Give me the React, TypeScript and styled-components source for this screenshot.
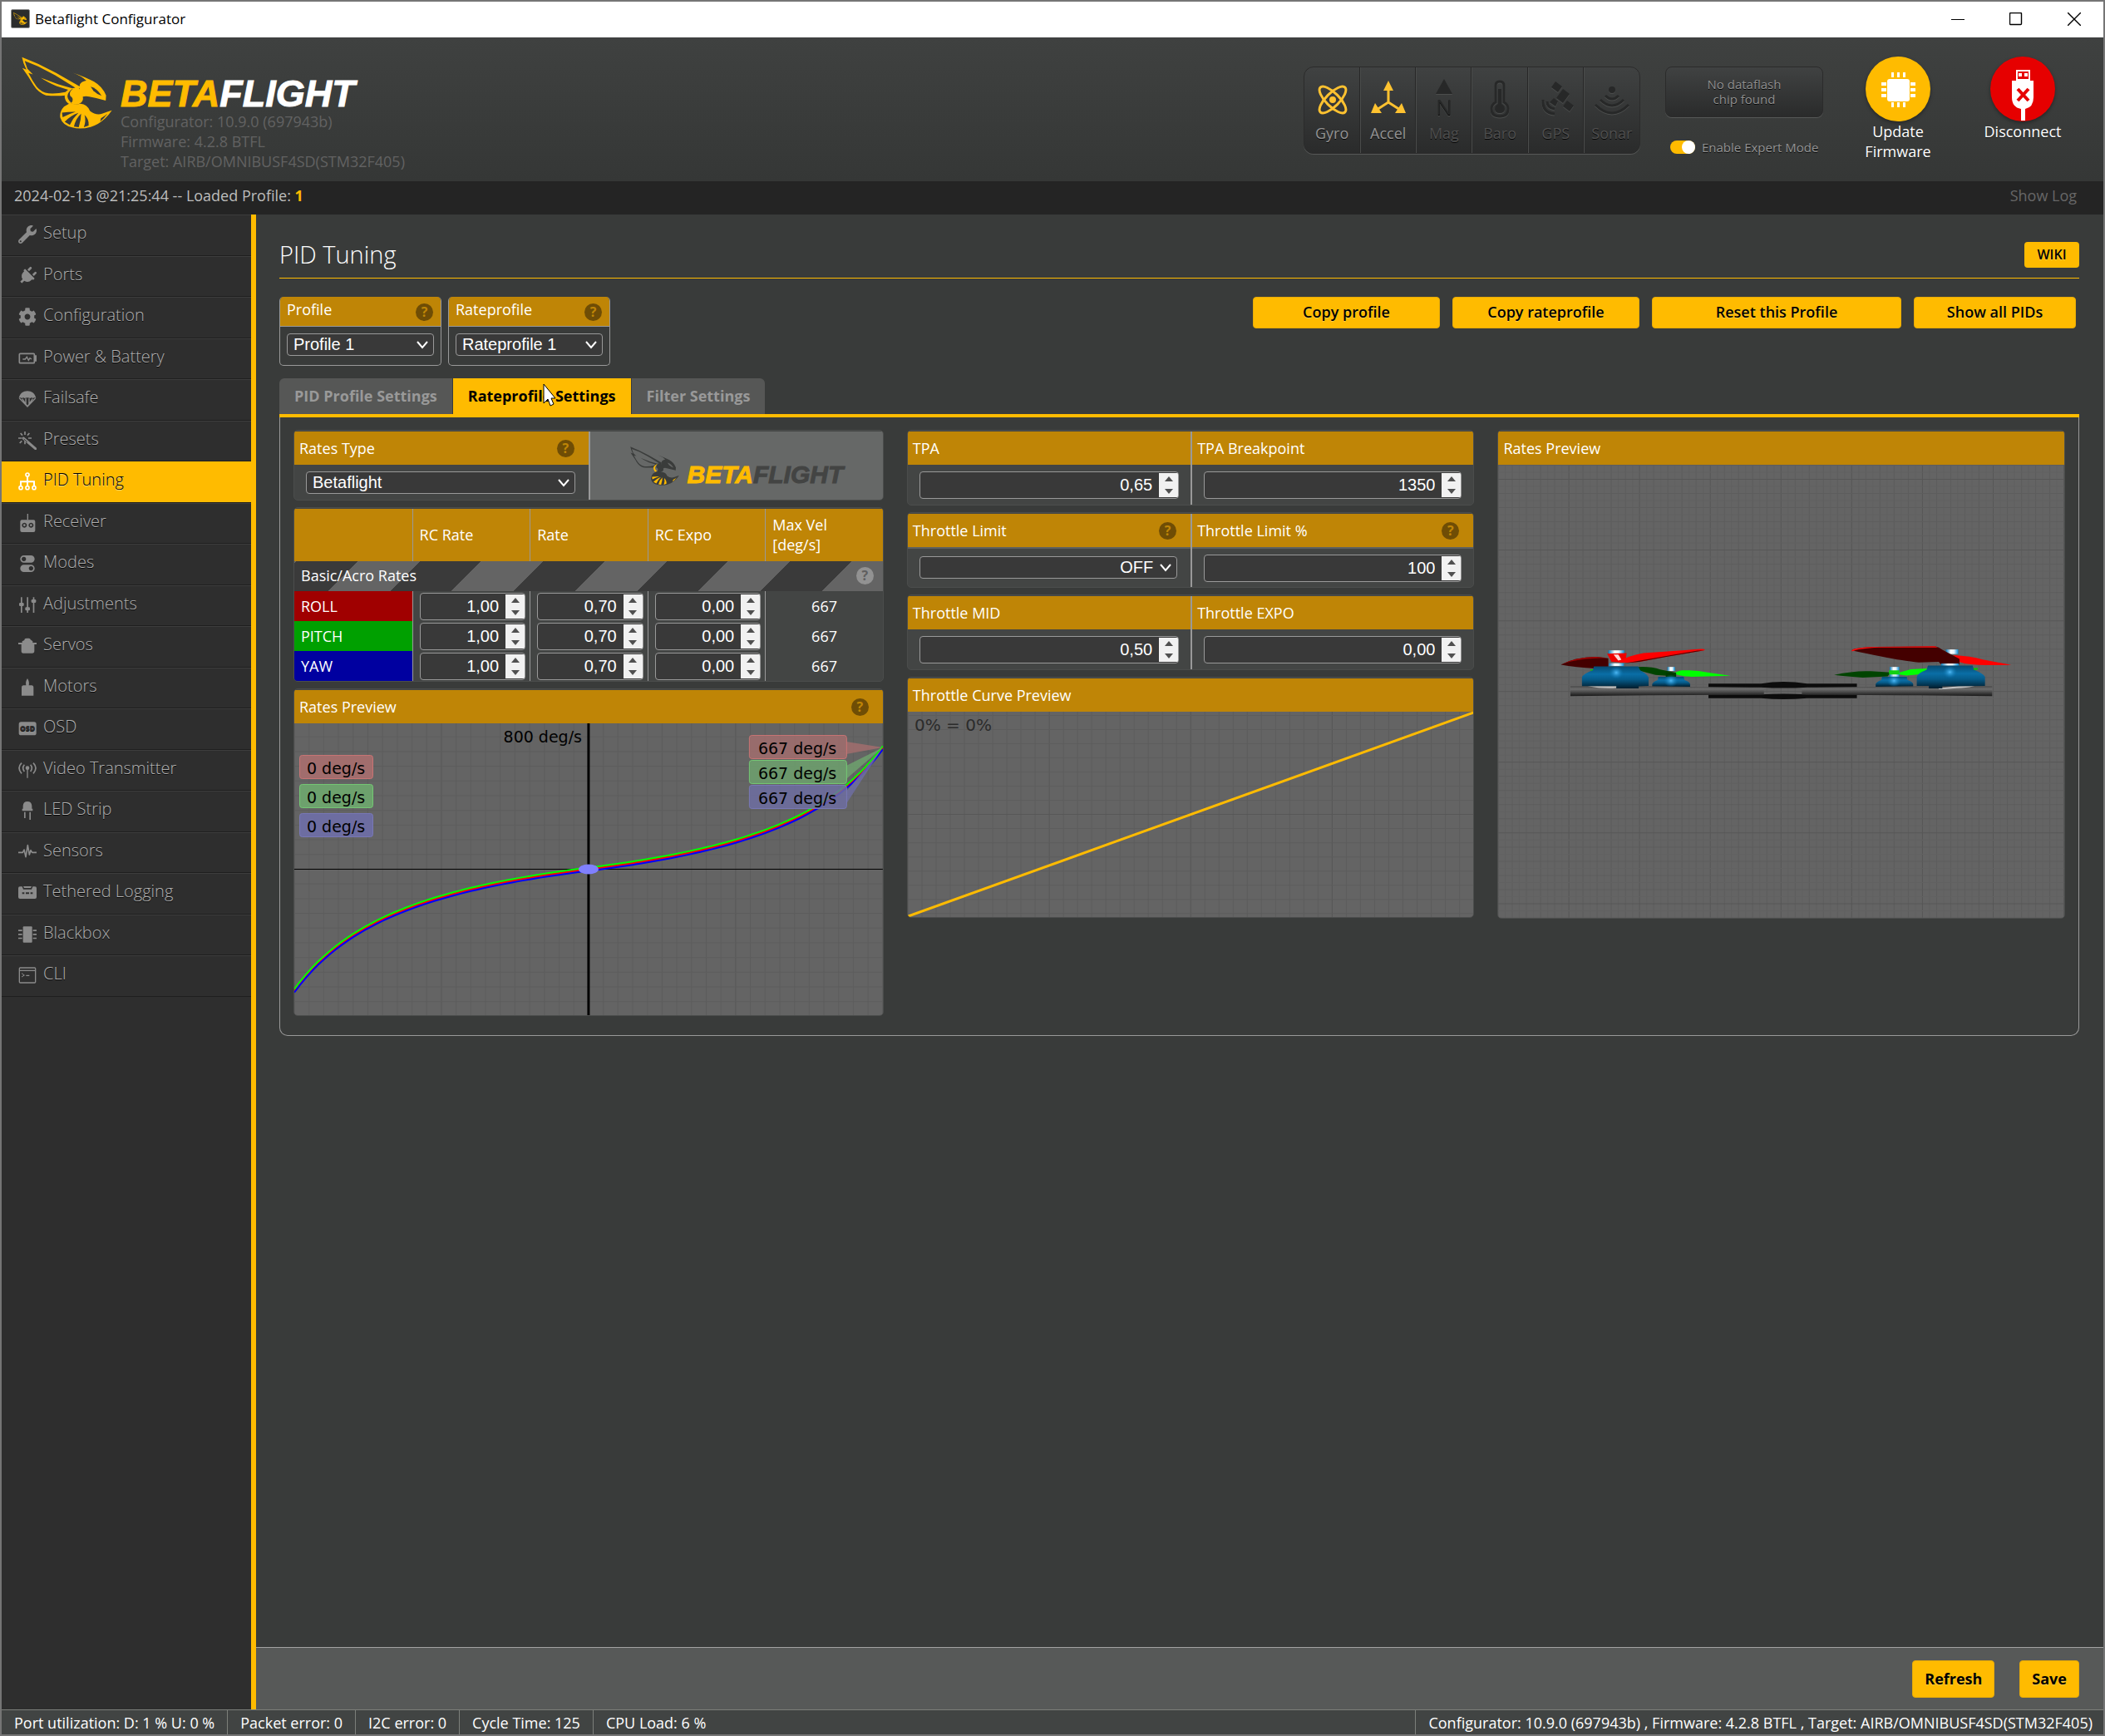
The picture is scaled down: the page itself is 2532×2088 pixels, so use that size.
import React, { useId, useState } from 'react';
import styled, { createGlobalStyle, css } from 'styled-components';
import { FaWrench, FaPlug, FaCog } from 'react-icons/fa';

const yellow = '#ffbb00';
const gold = '#bf8506';
const line = '#999999';
const ui = '"Open Sans", "Noto Sans", sans-serif';
const form = '"Liberation Sans", Arial, sans-serif';

const GlobalStyle = createGlobalStyle`
  *, *::before, *::after { box-sizing: border-box; }
  body {
    margin: 0;
    background: #393b3a;
    color: #ffffff;
    font: 400 18px/24px ${ui};
  }
  button, input, select { font: inherit; color: inherit; margin: 0; }
  button { cursor: pointer; }
  svg { display: block; flex: none; }
`;

/* ---------- window frame ---------- */

const Window = styled.div`
  min-height: 100vh;
  display: flex;
  flex-direction: column;
  border: 2px solid #757575;
`;

const TitleBar = styled.div`
  display: flex;
  align-items: center;
  height: 43px;
  padding: 0 0 2px 11px;
  gap: 6px;
  background: #ffffff;
  color: #000000;
  font-size: 17px;
`;

const AppIcon = styled.span`
  display: grid;
  place-items: center;
  width: 23px;
  height: 23px;
  background: #2b2c2c;
  border: 1px solid #8a8a8a;
  border-radius: 2px;
`;

const WindowControls = styled.div`
  display: flex;
  margin-left: auto;
`;

const WindowButton = styled.button`
  display: grid;
  place-items: center;
  width: 70px;
  height: 41px;
  padding: 0;
  border: 0;
  background: none;
`;

/* ---------- header ---------- */

const Header = styled.header`
  display: flex;
  align-items: flex-start;
  height: 173px;
  padding: 0 37px 0 24px;
  background: linear-gradient(#3f4140, #353736);
`;

const Brand = styled.div`
  display: flex;
  gap: 10px;
  padding-top: 23px;
`;

const BrandText = styled.div`
  padding-top: 24px;
  color: #626262;
`;

const Wordmark = styled.div<{ $size: number; $line: number; $tail: string }>`
  font: italic 700 ${p => p.$size}px/${p => p.$line}px ${form};
  color: ${yellow};
  -webkit-text-stroke: 1px currentColor;
  span { color: ${p => p.$tail}; }
`;

const HeaderTools = styled.div`
  display: flex;
  align-items: flex-start;
  gap: 30px;
  margin-left: auto;
`;

const bevel = css`
  background: linear-gradient(#404242, #2a2b2b);
  border: 1px solid #2b2b2b;
  box-shadow: 0 1px 0 #565857;
`;

const SensorList = styled.ul`
  ${bevel}
  display: grid;
  grid-template-columns: repeat(6, 1fr);
  width: 405px;
  height: 105px;
  margin: 35px 0 0;
  padding: 0;
  border-radius: 12px;
  list-style: none;
`;

const Sensor = styled.li<{ $on?: boolean }>`
  display: flex;
  flex-direction: column;
  align-items: center;
  gap: 7px;
  padding-top: 14px;
  color: ${p => (p.$on ? '#949494' : '#4f4f4f')};
  text-shadow: 0 1px rgba(0, 0, 0, 0.9);
  border-left: 1px solid #4a4c4b;
  border-right: 1px solid #272727;
  &:first-child { border-left: 0; }
  &:last-child { border-right: 0; }
  svg {
    color: ${p => (p.$on ? '#ffc230' : '#272828')};
    filter: ${p => (p.$on ? 'none' : 'drop-shadow(0 1px 0 #4c4e4d)')};
    overflow: visible;
  }
`;

const Storage = styled.div`
  display: flex;
  flex-direction: column;
  gap: 24px;
  width: 190px;
  margin-top: 35px;
`;

const Dataflash = styled.div`
  ${bevel}
  display: grid;
  place-content: center;
  height: 61px;
  padding-bottom: 2px;
  border-radius: 8px;
  color: #8f8f8f;
  font-size: 15px;
  line-height: 18px;
  text-align: center;
  text-shadow: 0 1px rgba(0, 0, 0, 0.9);
`;

const ExpertToggle = styled.label`
  display: flex;
  align-items: center;
  gap: 8px;
  padding-left: 6px;
  color: #949494;
  font-size: 15px;
  line-height: 24px;
  white-space: nowrap;
  text-shadow: 0 1px rgba(0, 0, 0, 0.9);
`;

const Switch = styled.input`
  appearance: none;
  display: flex;
  align-items: center;
  width: 30px;
  height: 16px;
  border-radius: 8px;
  background: #777777;
  &::before {
    content: '';
    width: 16px;
    height: 16px;
    border-radius: 8px;
    background: #ffffff;
  }
  &:checked {
    justify-content: flex-end;
    background: ${yellow};
  }
`;

const ConnectButtons = styled.div`
  display: flex;
  align-items: flex-start;
  gap: 30px;
  margin-top: 23px;
`;

const RoundButton = styled.button<{ $fill: string }>`
  width: 120px;
  padding: 0;
  border: 0;
  background: none;
  color: #ffffff;
  text-shadow: 0 1px rgba(0, 0, 0, 0.6);
  span {
    display: grid;
    place-items: end center;
    width: 78px;
    height: 78px;
    margin: 0 auto;
    border-radius: 50%;
    background: ${p => p.$fill};
    box-shadow: 0 2px 4px rgba(0, 0, 0, 0.35);
  }
`;

const LogBar = styled.div`
  display: flex;
  justify-content: space-between;
  height: 40px;
  padding: 0 32px 0 15px;
  background: #242424;
  color: #bdbdbd;
  line-height: 35px;
  strong { color: ${yellow}; }
`;

const LogLink = styled.a`
  color: #676767;
  text-decoration: none;
`;

/* ---------- body ---------- */

const Body = styled.div`
  flex: 1;
  display: flex;
`;

const Sidebar = styled.nav`
  flex: none;
  width: 306px;
  background: #2e2e2e;
  border-right: 6px solid ${yellow};
  ul { margin: 0; padding: 0; list-style: none; }
`;

const NavItem = styled.li`
  height: 50px;
  &:nth-child(even) { height: 49px; }
`;

const NavLink = styled.a<{ $active?: boolean }>`
  display: flex;
  align-items: center;
  gap: 8px;
  height: 100%;
  padding: 0 20px 6px;
  border-top: 1px solid #3d3d3d;
  border-bottom: 1px solid #1f1f1f;
  color: #b2b2b2;
  font-size: 20px;
  font-weight: 300;
  text-decoration: none;
  text-shadow: 0 1px rgba(0, 0, 0, 0.9);
  svg { margin-top: 4px; color: #8b8b8b; }
  ${p => p.$active && css`
    background: ${yellow};
    border-top-color: ${yellow};
    color: #000000;
    text-shadow: 0 1px rgba(255, 255, 255, 0.5);
    svg { color: #ffffff; }
  `}
`;

const Content = styled.main`
  flex: 1;
  min-width: 0;
  display: flex;
  flex-direction: column;
  background: #393b3a;
`;

const Scroll = styled.div`
  flex: 1;
  padding: 28px 29px 28px 28px;
`;

const Heading = styled.div`
  display: flex;
  justify-content: space-between;
  align-items: center;
  padding-bottom: 8px;
  border-bottom: 1px solid ${yellow};
  h1 {
    margin: 0;
    font-size: 29px;
    line-height: 40px;
    font-weight: 300;
  }
`;

const Button = styled.button<{ $width?: number; $tall?: boolean }>`
  width: ${p => (p.$width ? `${p.$width}px` : 'auto')};
  height: ${p => (p.$tall ? 45 : 38)}px;
  padding: 0 14px ${p => (p.$tall ? 0 : 2)}px;
  border: 1px solid #e8ab07;
  border-radius: 4px;
  background: ${yellow};
  color: #000000;
  font-weight: ${p => (p.$tall ? 700 : 600)};
  text-shadow: 0 1px rgba(255, 255, 255, 0.3);
`;

const WikiLink = styled.a`
  display: grid;
  place-items: center;
  width: 66px;
  height: 31px;
  padding-bottom: 1px;
  border-radius: 4px;
  background: ${yellow};
  color: #000000;
  font-size: 16px;
  font-weight: 600;
  text-decoration: none;
  text-shadow: 0 1px rgba(255, 255, 255, 0.3);
`;

const ProfileRow = styled.div`
  display: flex;
  align-items: flex-start;
  gap: 8px;
  margin: 22px 0 15px;
`;

const Actions = styled.div`
  display: flex;
  gap: 15px;
  margin: 0 4px 0 auto;
`;

const ProfileBox = styled.div`
  width: 195px;
  height: 83px;
  border: 1px solid ${line};
  border-top: 0;
  border-radius: 5px;
  overflow: hidden;
`;

const ProfileHead = styled.div`
  display: flex;
  justify-content: space-between;
  height: 36px;
  padding: 0 9px 0 8px;
  background: ${gold};
  border-bottom: 1px solid ${line};
  line-height: 30px;
  > span { margin-top: 8px; }
`;

const ProfileBody = styled.div`
  padding: 8px;
`;

const HelpDot = styled.span<{ $muted?: boolean }>`
  display: grid;
  place-items: center;
  width: 21px;
  height: 21px;
  border-radius: 50%;
  background: ${p => (p.$muted ? '#929292' : '#6f4d05')};
  color: ${p => (p.$muted ? '#5f5f5f' : gold)};
  font-size: 16px;
  font-weight: 700;
  line-height: 21px;
`;

const Tabs = styled.div`
  display: flex;
  gap: 1px;
  border-bottom: 4px solid ${yellow};
`;

const Tab = styled.button<{ $active?: boolean }>`
  height: 43px;
  padding: 0 18px 2px;
  border: 0;
  background: ${p => (p.$active ? yellow : '#565756')};
  color: ${p => (p.$active ? '#000000' : '#999999')};
  font-weight: 700;
  &:first-child { border-top-left-radius: 6px; }
  &:last-child { border-top-right-radius: 6px; }
`;

const Panel = styled.div`
  display: grid;
  grid-template-columns: 26fr 25fr 25fr;
  align-items: start;
  gap: 28px;
  padding: 15px 16px 23px;
  border: 1px solid ${line};
  border-top: 0;
  border-radius: 0 0 10px 10px;
`;

const Column = styled.div`
  display: grid;
  gap: 8px;
  min-width: 0;
`;

const Card = styled.section`
  padding-top: 1px;
  border: 1px solid #4b4d4c;
  border-radius: 5px;
  background: #434544;
  overflow: hidden;
`;

const CardHead = styled.div`
  display: flex;
  align-items: center;
  justify-content: space-between;
  height: 40px;
  padding: 0 17px 0 6px;
  background: ${gold};
`;

const Pair = styled.div`
  display: grid;
  grid-template-columns: 1fr 1fr;
  > * + * { border-left: 2px solid ${line}; }
`;

const Cell = styled.div`
  display: flex;
  flex-direction: column;
`;

const CellBody = styled.div<{ $ruled?: boolean; $tight?: boolean }>`
  height: ${p => (p.$tight ? 42 : 48)}px;
  padding: ${p => (p.$ruled ? 7 : 8)}px 14px 0;
  border-top: ${p => (p.$ruled ? '2px solid #5f6160' : '0')};
`;

const LogoCell = styled.div`
  display: flex;
  align-items: center;
  justify-content: center;
  background: #666867;
`;

const SmallLogo = styled.div`
  display: flex;
  align-items: flex-end;
  gap: 10px;
`;

const SelectBox = styled.div`
  position: relative;
  svg {
    position: absolute;
    right: 6px;
    top: 9px;
    pointer-events: none;
  }
  ${CellBody} > & {
    margin-right: 2px;
  }
`;

const RuledSelect = styled.div`
  padding: 2px 2px 0 0;
`;

const SelectField = styled.select<{ $right?: boolean }>`
  appearance: none;
  display: block;
  width: 100%;
  height: 27px;
  padding: 0 ${p => (p.$right ? 28 : 24)}px 0 7px;
  border: 1px solid ${line};
  border-radius: 4px;
  background: #393939;
  font: 400 20px/25px ${form};
  text-align-last: ${p => (p.$right ? 'right' : 'left')};
`;

const NumberBox = styled.div`
  display: flex;
  height: 33px;
  border: 1px solid ${line};
  border-radius: 4px;
  background: #393939;
  overflow: hidden;
  input {
    flex: 1;
    min-width: 0;
    padding: 0 8px 0 0;
    border: 0;
    outline: 0;
    background: none;
    font: 400 20px/31px ${form};
    text-align: right;
  }
`;

const Spinner = styled.div`
  display: flex;
  flex-direction: column;
  width: 23px;
  margin: 1px 0;
  background: #f1f1f1;
`;

const SpinButton = styled.button`
  flex: 1;
  display: grid;
  place-items: center;
  padding: 0;
  border: 0;
  background: none;
  color: #505050;
`;

const RateTable = styled.table`
  width: 100%;
  table-layout: fixed;
  border-collapse: separate;
  border-spacing: 0;
  th, td { text-align: left; font-weight: 400; }
  thead th {
    height: 63px;
    padding: 0 8px 1px;
    background: ${gold};
  }
  tr > * + * { border-left: 1px solid ${line}; }
`;

const BandCell = styled.td`
  height: 36px;
  padding: 0 11px 2px 8px;
  background: repeating-linear-gradient(135deg, #646464 0 2px, #3a3a3a 2px 54px, #646464 54px 105px);
  div {
    display: flex;
    align-items: center;
    justify-content: space-between;
  }
`;

const AxisCell = styled.th<{ $color: string }>`
  height: 36px;
  padding: 0 8px;
  background: ${p => p.$color};
`;

const InputCell = styled.td`
  padding: 2px 5px 1px 8px;
`;

const VelocityCell = styled.td`
  padding: 0;
  && { text-align: center; }
`;

const Graph = styled.svg`
  width: 100%;
  height: auto;
  background: #646464;
  font-family: "DejaVu Sans", Verdana, sans-serif;
`;

const Toolbar = styled.div`
  display: flex;
  align-items: center;
  justify-content: flex-end;
  gap: 30px;
  height: 75px;
  padding-right: 29px;
  border-top: 1px solid #a3a3a3;
  background: #575958;
`;

const StatusBar = styled.footer`
  display: flex;
  height: 30px;
  border-top: 1px solid #7c7f7a;
  background: #414443;
  line-height: 31px;
  white-space: nowrap;
`;

const Status = styled.div<{ $last?: boolean; $end?: boolean }>`
  padding: 0 15px;
  border-right: ${p => (p.$last ? '0' : '1px solid #7c7f7a')};
  ${p => p.$end && css`
    margin-left: auto;
    padding-right: 13px;
    border-left: 1px solid #7c7f7a;
  `}
`;

const Pointer = styled.svg`
  position: absolute;
  left: 653px;
  top: 461px;
  pointer-events: none;
`;

/* ---------- drawings ---------- */

function Wasp({ width, height, body, cut, thorax }: { width: number; height: number; body: string; cut: string; thorax: string }) {
  return (
    <svg width={width} height={height} viewBox="64 203 265 259" preserveAspectRatio="none" aria-hidden="true">
      <path fill={body} fillRule="evenodd" d="M65 205 L112 229 L165 262 L236 312 L230 322 L212 320 Q198 326 193 342 Q165 346 135 342 Q112 332 99 306 Q84 274 66 244 L78 250 Q68 226 65 205 Z M73 219 L81 247 L97 267 L84 262 Q96 292 108 311 Q122 332 143 335 Q168 337 192 330 L200 322 L166 309 Q138 294 120 279 L172 303 L212 317 L221 315 L162 270 L112 238 Z" />
      <path fill={body} d="M212 260 Q250 276 276 293 Q300 310 311 342 L310 361 Q288 353 262 347 Q252 344 243 347 Q246 364 234 371 Q220 380 208 370 Q221 356 206 344 Q202 328 214 319 Q226 315 234 320 Q230 296 248 291 Q252 289 254 290 Q240 272 212 260 Z" />
      <path fill={cut === yellow ? '#666867' : cut} d="M266 311 Q284 316 298 344 Q284 338 274 326 Z" />
      <path fill={thorax} d="M206 322 Q186 334 191 354 Q194 368 205 374 L209 368 Q199 358 198 345 Q198 332 211 320 Z" />
      <path fill={body} d="M207 369 Q219 378 236 372 Q256 374 264 398 Q282 415 301 407 Q318 400 328 396 Q318 414 308 425 Q288 448 266 455 Q236 465 212 457 Q184 450 177 422 Q174 400 188 382 Z" />
      <g fill={cut}>
        <path d="M182 404 Q206 400 222 401 Q204 408 184 420 Z" />
        <path d="M190 437 Q208 414 230 405 Q214 424 205 448 Z" />
        <path d="M217 454 Q222 426 238 408 Q238 430 231 456 Z" />
        <path d="M246 456 Q253 434 248 412 Q262 428 260 450 Z" />
        <path d="M296 424 Q308 416 315 408 Q306 424 294 436 Z" />
      </g>
    </svg>
  );
}

function Help({ muted }: { muted?: boolean }) {
  return <HelpDot $muted={muted} title="Help">?</HelpDot>;
}

const box = { width: 22, height: 22, viewBox: '0 0 66 66', fill: 'currentColor', 'aria-hidden': true } as const;
const stroke = { fill: 'none', stroke: 'currentColor' } as const;

const icons: Record<string, React.ReactNode> = {
  Setup: <FaWrench size={22} />,
  Ports: <FaPlug size={22} transform="rotate(45)" />,
  Configuration: <FaCog size={22} />,
  'Power & Battery': (
    <svg {...box}><rect x="4" y="16" width="54" height="34" rx="3" {...stroke} strokeWidth="5" /><path d="M60 22h6v22h-6z" /><path d="M16 36h9l6-8 6 12 5-8 6 4" {...stroke} strokeWidth="4" /></svg>
  ),
  Failsafe: (
    <svg {...box}><path d="M2 30C6 12 18 4 33 4s27 8 31 26q-6-4-11 0-5-4-10 0-10-4-20 0-5-4-10 0-5-4-11 0Z" /><path d="M4 30 33 60 62 30M14 32l18 26M52 32 34 58M27 31v24M39 31v24" {...stroke} strokeWidth="4" /></svg>
  ),
  Presets: (
    <svg {...box}><path d="m18 24 44 38" {...stroke} strokeWidth="9" strokeLinecap="round" /><path d="m20 27 12 11" stroke="#2e2e2e" strokeWidth="3" /><path d="M24 0v12M8 6l7 8M40 6l-7 8M0 24h12M48 24H36M5 42l8-8M24 34v12" {...stroke} strokeWidth="5" /></svg>
  ),
  'PID Tuning': (
    <svg {...box}><g {...stroke} strokeWidth="5"><circle cx="33" cy="9" r="6" /><circle cx="9" cy="56" r="6" /><circle cx="33" cy="56" r="6" /><circle cx="57" cy="56" r="6" /><path d="M33 15v35M9 50V34h48v16" strokeWidth="6" /></g></svg>
  ),
  Receiver: (
    <svg {...box}><path d="M32 0h4v22h-4z" /><path fillRule="evenodd" d="M13 22h42q6 0 6 6v32q0 6-6 6H13q-6 0-6-6V28q0-6 6-6Zm9 10a9 9 0 1 0 .1 0Zm24 0a9 9 0 1 0 .1 0Z" /><circle cx="22" cy="41" r="4" /><circle cx="46" cy="41" r="4" /></svg>
  ),
  Modes: (
    <svg {...box}><path fillRule="evenodd" d="M20 3h26a13 13 0 0 1 0 26H20a13 13 0 0 1 0-26Zm0 5a8 8 0 1 0 .1 0ZM20 37h26a13 13 0 0 1 0 26H20a13 13 0 0 1 0-26Zm26 5a8 8 0 1 0 .1 0Z" /></svg>
  ),
  Adjustments: (
    <svg {...box}><path d="M9 4h5v56H9zM31 4h5v56h-5zM53 4h5v56h-5z" /><rect x="3" y="24" width="17" height="12" rx="4" /><rect x="25" y="40" width="17" height="12" rx="4" /><rect x="47" y="12" width="17" height="12" rx="4" /></svg>
  ),
  Servos: (
    <svg {...box}><path d="M22 12q0-7 8-7h8q6 0 6 5l8 6v5h14v6h-8v24q0 8-8 8H18q-7 0-7-8V27H0v-6h14v-5l8-4Z" /></svg>
  ),
  Motors: (
    <svg {...box}><path d="M33 0q8 12 5 25h10q7 0 7 8v29H12V33q0-8 7-8h9Q25 12 33 0Z" /></svg>
  ),
  OSD: (
    <svg {...box}><rect x="2" y="10" width="63" height="48" rx="8" /><text x="33" y="43" textAnchor="middle" fill="#2e2e2e" fontFamily="Open Sans, sans-serif" fontWeight="800" fontSize="26">OSD</text></svg>
  ),
  'Video Transmitter': (
    <svg {...box}><circle cx="33" cy="26" r="7" /><path d="M31 30h4v32h-4z" /><path d="M22 14q-10 12 0 25M44 14q10 12 0 25M12 8Q-6 26 12 46M54 8q18 18 0 38" {...stroke} strokeWidth="5" /></svg>
  ),
  'LED Strip': (
    <svg {...box}><path d="M17 26V16Q18 0 33 0t16 16v10h3v8H14v-8ZM21 38h5v22h-5zM40 38h5v28h-5z" /></svg>
  ),
  Sensors: (
    <svg {...box}><path d="M0 34h16l5-10 6 26 7-42 6 34 5-16 5 8h16" {...stroke} strokeWidth="5" strokeLinejoin="round" /></svg>
  ),
  'Tethered Logging': (
    <svg {...box}><path fillRule="evenodd" d="M6 10h8l4 10h30l4-10h8q6 0 6 6v32q0 6-6 6H6q-6 0-6-6V16q0-6 6-6Zm8 21v6h8v-6Zm13 0v6h12v-6Zm17 0v6h8v-6Z" /><path d="M18 9h30l-3 6H21Z" /></svg>
  ),
  Blackbox: (
    <svg {...box}><rect x="17" y="4" width="33" height="58" rx="3" /><path d="M0 16h14v5H0zM0 30h14v5H0zM0 44h14v5H0zM53 16h13v5H53zM53 30h13v5H53zM53 44h13v5H53z" /></svg>
  ),
  CLI: (
    <svg {...box}><rect x="4" y="6" width="58" height="54" rx="3" {...stroke} strokeWidth="4" /><path d="M4 14h58v4H4zM28 32h12v4H28z" /><path d="m12 26 10 7-10 6" {...stroke} strokeWidth="3" /></svg>
  ),
};

const sensorBox = { width: 44, height: 46, viewBox: '0 0 44 46', fill: 'currentColor', 'aria-hidden': true } as const;

const sensors: { name: string; on?: boolean; icon: React.ReactNode }[] = [
  {
    name: 'Gyro', on: true,
    icon: <svg {...sensorBox}><g {...stroke} strokeWidth="3"><ellipse cx="23" cy="25" rx="21" ry="8" transform="rotate(45 23 25)" /><ellipse cx="23" cy="25" rx="21" ry="8" transform="rotate(-45 23 25)" /></g><circle cx="23" cy="25" r="4" /></svg>,
  },
  {
    name: 'Accel', on: true,
    icon: <svg {...sensorBox}><path d="M22 12v16L8 37M22 28l14 9" {...stroke} strokeWidth="3" /><path d="m22 2 6 12H16ZM1 41 6 29l8 12ZM43 41 38 29l-8 12Z" /></svg>,
  },
  {
    name: 'Mag',
    icon: <svg {...sensorBox}><path d="m22 0 10 18H12Z" /><text x="22" y="43" textAnchor="middle" fontFamily="Open Sans, sans-serif" fontSize="26">N</text></svg>,
  },
  {
    name: 'Baro',
    icon: <svg {...sensorBox}><path d="M17 8q0-5 5-5t5 5v20q5 3 5 8 0 9-10 9t-10-9q0-5 5-8Z" {...stroke} strokeWidth="3" /><path d="M20 12h4v18q4 2 4 6 0 5-6 5t-6-5q0-4 4-6Z" /></svg>,
  },
  {
    name: 'GPS',
    icon: <svg {...sensorBox}><path d="m22 3 8 6-5 7-8-6ZM31 12l8 6-8 11-8-6ZM36 26l8 6-5 7-8-6Z" /><path d="M12 27q0 8 9 9M7 25q-1 16 14 17" {...stroke} strokeWidth="3" /><path d="m20 23 5 4-3 6-7-5Z" /></svg>,
  },
  {
    name: 'Sonar',
    icon: <svg {...sensorBox}><circle cx="22" cy="13" r="4" /><path d="M14 20q8 8 16 0M8 25q14 14 28 0M2 31q20 20 40 0" {...stroke} strokeWidth="3" /></svg>,
  },
];

/* A square grid centred on the drawing, as behind every preview. */
function GridLines({ width, height, step }: { width: number; height: number; step: number }) {
  const marks = (size: number) => {
    const half = Math.floor(size / 2 / step);
    return Array.from({ length: half * 2 + 1 }, (_, i) => i - half);
  };
  const tone = (i: number) => (i % 10 === 0 ? '#575757' : i % 2 === 0 || step > 12 ? '#5d5d5d' : '#616161');
  return (
    <g strokeWidth="1">
      {marks(width).map(i => <path key={`x${i}`} stroke={tone(i)} d={`M${width / 2 + i * step} 0V${height}`} />)}
      {marks(height).map(i => <path key={`y${i}`} stroke={tone(i)} d={`M0 ${height / 2 + i * step}H${width}`} />)}
    </g>
  );
}

function ratePath(offset: number) {
  const points: string[] = [];
  for (let i = -50; i <= 50; i++) {
    const stick = i / 50;
    const velocity = (200 * stick) / (1 - Math.abs(stick) * 0.7);
    points.push(`${354 + stick * 354} ${175.5 - (velocity / 800) * 175.5 + offset}`);
  }
  return 'M' + points.join('L');
}

const axisTints = [
  { fill: '#a16d6d', edge: '#c97474' },
  { fill: '#6da16d', edge: '#74c974' },
  { fill: '#6d6da1', edge: '#7878b8' },
];

function RatesCurve() {
  const tails = ['M664 22V37L708 29Z', 'M664 51V67L708 29Z', 'M664 82V97L708 29Z'];
  return (
    <Graph viewBox="0 0 708 351" role="img" aria-label="Rates curve">
      <GridLines width={708} height={351} step={17.7} />
      <path d="M0 175.5H708" stroke="#000" strokeWidth="1" />
      <path d="M354 0V351" stroke="#000" strokeWidth="3" />
      <g fill="none" strokeWidth="2">
        <path d={ratePath(0)} stroke="#f00" />
        <path d={ratePath(-2)} stroke="#0f0" />
        <path d={ratePath(2)} stroke="#00f" />
      </g>
      <ellipse cx="354" cy="175.5" rx="12" ry="6" fill="#8080ff" />
      {axisTints.map((t, i) => (
        <g key={t.fill} fill={t.fill} stroke={t.edge}>
          <rect x="6.5" y={38.5 + i * 35} width="88" height="28" rx="3" />
          <path d={tails[i]} stroke="none" fillOpacity="0.85" />
          <rect x="547.5" y={14.5 + i * 30} width="117" height="28" rx="3" fillOpacity="0.85" />
        </g>
      ))}
      <g fill="#000" fontSize="19">
        <text x="346" y="23" textAnchor="end">800 deg/s</text>
        {[0, 1, 2].map(i => <text key={i} x="15" y={61 + i * 35}>0 deg/s</text>)}
        {[0, 1, 2].map(i => <text key={i} x="558" y={37 + i * 30}>667 deg/s</text>)}
      </g>
    </Graph>
  );
}

function ThrottleCurve() {
  return (
    <Graph viewBox="0 0 680 247" role="img" aria-label="Throttle curve">
      <GridLines width={680} height={247} step={17} />
      <path d="M0 246 680 1" stroke={yellow} strokeWidth="3" />
      <text x="8" y="23" fontSize="20" fill="#2b2b2b">0% = 0%</text>
    </Graph>
  );
}

const Motor = ({ d, cx, top }: { d: string; cx: number; top: number }) => (
  <>
    <path d={d} fill="url(#motor)" />
    <ellipse cx={cx} cy={top + 24} rx="18" ry="22" fill="url(#shine)" />
  </>
);

function Drone() {
  return (
    <Graph viewBox="0 0 680 545" role="img" aria-label="Model preview">
      <defs>
        <linearGradient id="motor" x2="0" y2="1"><stop stopColor="#064a70" /><stop offset=".35" stopColor="#0a6ea6" /><stop offset=".6" stopColor="#065a88" /><stop offset="1" stopColor="#001c2c" /></linearGradient>
        <radialGradient id="shine"><stop stopColor="#4db8f5" /><stop offset="1" stopColor="#0a78b6" stopOpacity="0" /></radialGradient>
        <linearGradient id="arm" x2="0" y2="1"><stop stopColor="#4a4a4a" /><stop offset=".3" stopColor="#6c6c6c" /><stop offset="1" stopColor="#171717" /></linearGradient>
        <linearGradient id="hub"><stop stopColor="#0a78b6" /><stop offset=".4" stopColor="#ffffff" /><stop offset=".65" stopColor="#e8f6ff" /><stop offset="1" stopColor="#0a8fd6" /></linearGradient>
      </defs>
      <GridLines width={680} height={545} step={8.5} />
      <g transform="translate(-22 161) scale(.4796 .3444)">
        <path d="M277 246h14v8l-14-4ZM1230 242h18v5l-18 6Z" fill="#00c800" />
        <path d="M397 238Q430 236 452 247L490 258 482 270 440 266 397 250Z" fill="#004400" />
        <path d="M484 259 505 250Q540 248 570 257L628 269 530 272Q500 270 484 259Z" fill="#00ff00" />
        <rect x="466" y="258" width="26" height="15" fill="#003a00" />
        <rect x="470" y="238" width="19" height="14" fill="url(#hub)" />
        <Motor cx={479} top={262} d="M447 272H511L513 284Q526 290 527 298V307H432V298Q434 290 446 284Z" />
        <path d="M888 266Q940 250 980 253L1030 257 1022 271 960 275Q920 272 888 266Z" fill="#004400" />
        <path d="M1040 262 1080 246 1121 243 1115 262 1070 268Z" fill="#00ff00" />
        <rect x="1027" y="238" width="24" height="34" fill="url(#hub)" />
        <path d="M1025 250 1052 250 1050 264 1026 264Z" fill="#12d012" />
        <Motor cx={1038} top={262} d="M1008 272H1070L1072 284Q1085 290 1086 298V307H992V298Q994 290 1006 284Z" />
        <path d="M573 296H705Q760 284 820 296H945V309H820Q760 314 705 309H573Z" fill="#0c0c0c" />
        <path d="M573 334H705Q760 330 820 334H945V347H820Q760 354 705 347H573Z" fill="#0c0c0c" />
        <path d="M227 305H420L573 308 712 311V335L420 337 227 340Z" fill="url(#arm)" />
        <path d="M807 311 945 308 1100 305H1284V340L1100 337 807 335Z" fill="url(#arm)" />
        <path d="M270 305H345V311Q310 316 270 305ZM1150 312 1200 305H1240Q1220 312 1150 316Z" fill="#d4d4d4" opacity=".85" />
        <path d="M203 230Q240 204 290 203L322 208V238L290 243Q240 240 203 230Z" fill="#440000" />
        <path d="M203 230Q240 204 290 203L320 206Q240 207 203 230Z" fill="#a00000" />
        <rect x="322" y="180" width="40" height="14" fill="url(#hub)" />
        <path d="M319 192 368 190 366 210 360 222 330 220Z" fill="#ee0000" />
        <path d="M335 195h12l8 18-8 3Z" fill="#ffd8d8" />
        <path d="M345 221Q370 200 410 190L470 184 556 175Q568 176 562 180L470 202 400 220Q370 226 345 221Z" fill="#ff0000" />
        <path d="M562 180 470 202 400 220 362 225 470 199 545 181Z" fill="#550000" />
        <rect x="323" y="225" width="38" height="10" fill="url(#hub)" />
        <Motor cx={342} top={234} d="M286 236H397L402 250Q420 264 423 275V304L398 306V313H342V305H256V275Q258 262 283 250Z" />
        <rect x="1168" y="177" width="31" height="16" fill="url(#hub)" />
        <path d="M1186 197Q1230 200 1260 212L1332 231Q1290 233 1250 231 1210 228 1190 214Z" fill="#ff0000" />
        <path d="M932 180Q940 170 990 168L1140 166Q1150 168 1160 179L1202 210V228H1155L1150 220 1100 222Q1050 216 932 180Z" fill="#440000" />
        <path d="M932 180Q940 170 990 168L1140 166 1148 170H1000Q950 173 932 184Z" fill="#ff1010" />
        <rect x="1156" y="226" width="44" height="9" fill="url(#hub)" />
        <Motor cx={1178} top={232} d="M1123 233H1235L1238 248Q1262 262 1266 272V304L1159 306V313H1125V304H1095V272Q1098 260 1120 248Z" />
      </g>
    </Graph>
  );
}

/* ---------- controls ---------- */

function Select({ id, label, value, right }: { id?: string; label?: string; value: string; right?: boolean }) {
  return (
    <SelectBox>
      <SelectField id={id} aria-label={label} $right={right} defaultValue={value}>
        <option>{value}</option>
      </SelectField>
      <svg width="15" height="10" viewBox="0 0 15 10" fill="none" stroke="#fff" strokeWidth="2"><path d="m1 1 6 7 6-7" /></svg>
    </SelectBox>
  );
}

function NumberInput({ id, label, value, step = 0.01 }: { id?: string; label?: string; value: string; step?: number }) {
  const [text, setText] = useState(value);
  const digits = step < 1 ? 2 : 0;
  const bump = (by: number) =>
    setText(t => Math.max(0, parseFloat(t.replace(',', '.')) + by).toFixed(digits).replace('.', ','));
  return (
    <NumberBox>
      <input id={id} aria-label={label} inputMode="decimal" value={text} onChange={e => setText(e.target.value)} />
      <Spinner>
        <SpinButton type="button" tabIndex={-1} aria-label="Increase" onClick={() => bump(step)}>
          <svg width="10" height="6" viewBox="0 0 10 6" fill="currentColor"><path d="M0 6 5 0l5 6Z" /></svg>
        </SpinButton>
        <SpinButton type="button" tabIndex={-1} aria-label="Decrease" onClick={() => bump(-step)}>
          <svg width="10" height="6" viewBox="0 0 10 6" fill="currentColor"><path d="M0 0 5 6l5-6Z" /></svg>
        </SpinButton>
      </Spinner>
    </NumberBox>
  );
}

interface FieldProps { label: string; value: string; step?: number; kind?: 'select'; help?: boolean; ruled?: boolean }

function Field({ label, value, step, kind, help, ruled }: FieldProps) {
  const id = useId();
  return (
    <Cell>
      <CardHead><label htmlFor={id}>{label}</label>{help && <Help />}</CardHead>
      <CellBody $ruled={ruled}>
        {kind === 'select'
          ? <RuledSelect><Select id={id} value={value} right /></RuledSelect>
          : <NumberInput id={id} value={value} step={step} />}
      </CellBody>
    </Cell>
  );
}

function ProfilePicker({ label, value }: { label: string; value: string }) {
  const id = useId();
  return (
    <ProfileBox>
      <ProfileHead><label htmlFor={id}>{label}</label><Help /></ProfileHead>
      <ProfileBody><Select id={id} value={value} /></ProfileBody>
    </ProfileBox>
  );
}

/* ---------- page ---------- */

const axes = [
  { name: 'ROLL', color: '#a00000' },
  { name: 'PITCH', color: '#00a000' },
  { name: 'YAW', color: '#0000a0' },
];

const rates = [
  { name: 'RC Rate', value: '1,00' },
  { name: 'Rate', value: '0,70' },
  { name: 'RC Expo', value: '0,00' },
];

const tabs = ['PID Profile Settings', 'Rateprofile Settings', 'Filter Settings'];

export default function App() {
  return (
    <>
      <GlobalStyle />
      <Window>
        <TitleBar>
          <AppIcon><Wasp width={17} height={15} body={yellow} cut="#2b2c2c" thorax={yellow} /></AppIcon>
          Betaflight Configurator
          <WindowControls>
            <WindowButton aria-label="Minimize"><svg width="16" height="16" viewBox="0 0 16 16"><path d="M0 8.5h16" stroke="#000" /></svg></WindowButton>
            <WindowButton aria-label="Maximize"><svg width="16" height="16" viewBox="0 0 16 16"><rect x=".5" y=".5" width="14" height="14" rx="1" fill="none" stroke="#000" strokeWidth="1.4" /></svg></WindowButton>
            <WindowButton aria-label="Close"><svg width="16" height="16" viewBox="0 0 16 16"><path d="m0 0 16 16M16 0 0 16" stroke="#000" strokeWidth="1.4" /></svg></WindowButton>
          </WindowControls>
        </TitleBar>

        <Header>
          <Brand>
            <Wasp width={109} height={87} body={yellow} cut="#393b3a" thorax={yellow} />
            <BrandText>
              <Wordmark $size={45} $line={42} $tail="#ffffff">BETA<span>FLIGHT</span></Wordmark>
              <div>Configurator: 10.9.0 (697943b)</div>
              <div>Firmware: 4.2.8 BTFL</div>
              <div>Target: AIRB/OMNIBUSF4SD(STM32F405)</div>
            </BrandText>
          </Brand>
          <HeaderTools>
            <SensorList>
              {sensors.map(s => <Sensor key={s.name} $on={s.on}>{s.icon}{s.name}</Sensor>)}
            </SensorList>
            <Storage>
              <Dataflash>No dataflash<br />chip found</Dataflash>
              <ExpertToggle><Switch type="checkbox" defaultChecked />Enable Expert Mode</ExpertToggle>
            </Storage>
            <ConnectButtons>
              <RoundButton $fill={yellow}>
                <span>
                  <svg width="78" height="78" viewBox="0 0 78 78" fill="#fff">
                    <rect x="26" y="27" width="27" height="27" rx="3" />
                    <path d="M31 19h3v6h-3zM38 19h3v6h-3zM45 19h3v6h-3zM31 55h3v6h-3zM38 55h3v6h-3zM45 55h3v6h-3zM19 31h6v4h-6zM19 38h6v4h-6zM19 45h6v4h-6zM54 31h6v4h-6zM54 38h6v4h-6zM54 45h6v4h-6z" />
                  </svg>
                </span>
                Update<br />Firmware
              </RoundButton>
              <RoundButton $fill="#e60000">
                <span>
                  <svg width="78" height="78" viewBox="0 0 78 78" fill="#fff">
                    <path fillRule="evenodd" d="M31 16h17v13H31ZM33 18v9h13v-9Z" />
                    <path d="M34 20h4v4h-4zM41 20h4v4h-4z" />
                    <path d="M26 29h26v20q0 12-10 14v14h-5V63q-11-2-11-14Z" />
                    <path d="m33 39 13 14M46 39 33 53" stroke="#e60000" strokeWidth="4" />
                  </svg>
                </span>
                Disconnect
              </RoundButton>
            </ConnectButtons>
          </HeaderTools>
        </Header>

        <LogBar>
          <div>2024-02-13 @21:25:44 -- Loaded Profile: <strong>1</strong></div>
          <LogLink href="#log">Show Log</LogLink>
        </LogBar>

        <Body>
          <Sidebar>
            <ul>
              {Object.entries(icons).map(([name, icon]) => (
                <NavItem key={name}>
                  <NavLink href="#tab" $active={name === 'PID Tuning'}>{icon}{name}</NavLink>
                </NavItem>
              ))}
            </ul>
          </Sidebar>

          <Content>
            <Scroll>
              <Heading>
                <h1>PID Tuning</h1>
                <WikiLink href="#wiki">WIKI</WikiLink>
              </Heading>

              <ProfileRow>
                <ProfilePicker label="Profile" value="Profile 1" />
                <ProfilePicker label="Rateprofile" value="Rateprofile 1" />
                <Actions>
                  <Button $width={225}>Copy profile</Button>
                  <Button $width={225}>Copy rateprofile</Button>
                  <Button $width={300}>Reset this Profile</Button>
                  <Button $width={195}>Show all PIDs</Button>
                </Actions>
              </ProfileRow>

              <Tabs role="tablist">
                {tabs.map((t, i) => <Tab key={t} role="tab" aria-selected={i === 1} $active={i === 1}>{t}</Tab>)}
              </Tabs>

              <Panel>
                <Column>
                  <Card>
                    <Pair>
                      <Cell>
                        <CardHead><label htmlFor="rates-type">Rates Type</label><Help /></CardHead>
                        <CellBody $tight><Select id="rates-type" value="Betaflight" /></CellBody>
                      </Cell>
                      <LogoCell>
                        <SmallLogo>
                          <Wasp width={59} height={47} body="#3a3c3b" cut={yellow} thorax={yellow} />
                          <Wordmark $size={30} $line={26} $tail="#434443">BETA<span>FLIGHT</span></Wordmark>
                        </SmallLogo>
                      </LogoCell>
                    </Pair>
                  </Card>

                  <Card>
                    <RateTable>
                      <thead>
                        <tr>
                          <th />
                          {rates.map(r => <th key={r.name} scope="col">{r.name}</th>)}
                          <th scope="col">Max Vel<br />[deg/s]</th>
                        </tr>
                      </thead>
                      <tbody>
                        <tr>
                          <BandCell colSpan={5}><div>Basic/Acro Rates<Help muted /></div></BandCell>
                        </tr>
                        {axes.map(a => (
                          <tr key={a.name}>
                            <AxisCell scope="row" $color={a.color}>{a.name}</AxisCell>
                            {rates.map(r => (
                              <InputCell key={r.name}><NumberInput label={`${a.name} ${r.name}`} value={r.value} /></InputCell>
                            ))}
                            <VelocityCell>667</VelocityCell>
                          </tr>
                        ))}
                      </tbody>
                    </RateTable>
                  </Card>

                  <Card>
                    <CardHead>Rates Preview<Help /></CardHead>
                    <RatesCurve />
                  </Card>
                </Column>

                <Column>
                  <Card>
                    <Pair>
                      <Field label="TPA" value="0,65" />
                      <Field label="TPA Breakpoint" value="1350" step={10} />
                    </Pair>
                  </Card>
                  <Card>
                    <Pair>
                      <Field label="Throttle Limit" value="OFF" kind="select" help ruled />
                      <Field label="Throttle Limit %" value="100" step={1} help ruled />
                    </Pair>
                  </Card>
                  <Card>
                    <Pair>
                      <Field label="Throttle MID" value="0,50" />
                      <Field label="Throttle EXPO" value="0,00" />
                    </Pair>
                  </Card>
                  <Card>
                    <CardHead>Throttle Curve Preview</CardHead>
                    <ThrottleCurve />
                  </Card>
                </Column>

                <Column>
                  <Card>
                    <CardHead>Rates Preview</CardHead>
                    <Drone />
                  </Card>
                </Column>
              </Panel>
            </Scroll>

            <Toolbar>
              <Button $tall>Refresh</Button>
              <Button $tall>Save</Button>
            </Toolbar>
          </Content>
        </Body>

        <StatusBar>
          <Status>Port utilization: D: 1 % U: 0 %</Status>
          <Status>Packet error: 0</Status>
          <Status>I2C error: 0</Status>
          <Status>Cycle Time: 125</Status>
          <Status $last>CPU Load: 6 %</Status>
          <Status $end $last>Configurator: 10.9.0 (697943b) , Firmware: 4.2.8 BTFL , Target: AIRB/OMNIBUSF4SD(STM32F405)</Status>
        </StatusBar>

        <Pointer width="16" height="28" viewBox="0 0 16 28" aria-hidden="true">
          <path d="M1 1V24L6 19 9 27 13 25 10 18H15Z" fill="#fff" stroke="#000" />
        </Pointer>
      </Window>
    </>
  );
}
